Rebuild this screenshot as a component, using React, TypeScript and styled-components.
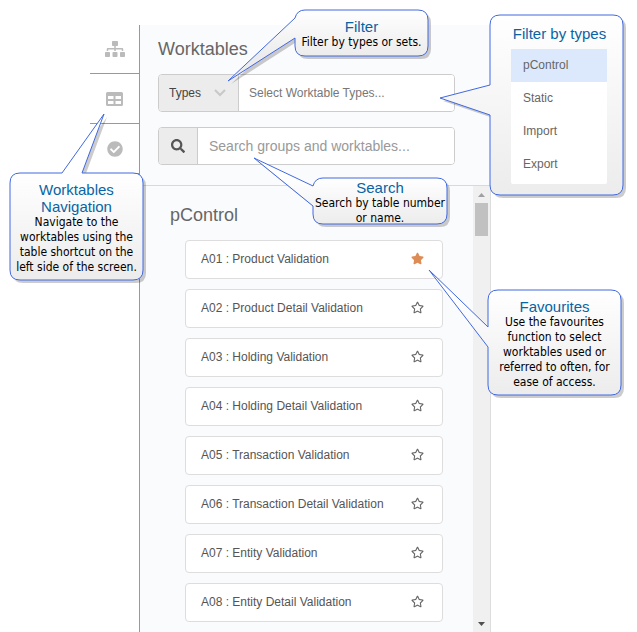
import React from "react";
import styled, { createGlobalStyle } from "styled-components";
import { FaCheckCircle, FaRegStar, FaSearch, FaSitemap, FaStar } from "react-icons/fa";

const GlobalStyle = createGlobalStyle`
  * { box-sizing: border-box; }
  body { margin: 0; background: #fff; }
  body, button, input, select { font-family: "Liberation Sans", Arial, sans-serif; }
`;

const Page = styled.div`
  position: relative;
  display: grid;
  grid-template-columns: 90px 50px minmax(0, 1fr) 146px;
  min-height: 100vh;
  padding-top: 25px;
`;

const Nav = styled.nav`
  grid-column: 2;
  display: flex;
  flex-direction: column;
  border-right: 1px solid #999;
`;

const NavButton = styled.button`
  display: flex;
  align-items: center;
  justify-content: center;
  height: 50px;
  padding: 0;
  border: 0;
  border-bottom: 1px solid #999;
  background: none;
  color: #bbb;

  &:first-child { height: 49px; }
`;

const Panel = styled.main`
  display: flex;
  flex-direction: column;
  border-right: 1px solid #ddd;
  background: #fafbfd;
`;

const PanelHeader = styled.header`
  display: flex;
  flex-direction: column;
  gap: 15px;
  padding: 13px 35px 20px 18px;
  border-bottom: 1px solid #d8d9db;
`;

const Title = styled.h1`
  margin: 0 0 -1px;
  color: #666;
  font-size: 18px;
  font-weight: 400;
  line-height: 22px;
`;

const FieldRow = styled.div`
  display: flex;
  height: 38px;
  overflow: hidden;
  border: 1px solid #ccc;
  border-radius: 4px;
  background: #fff;
`;

const TypePicker = styled.label`
  display: grid;
  grid-template-columns: 1fr 36px;
  align-items: center;
  width: 80px;
  border-right: 1px solid #ccc;
  background: #ececec;
  color: #c8c8c8;

  svg {
    grid-area: 1 / 2;
    justify-self: center;
  }
`;

const TypeSelect = styled.select`
  grid-area: 1 / 1 / 2 / 3;
  height: 100%;
  padding: 0 10px;
  border: 0;
  appearance: none;
  background: none;
  color: #444;
  font-size: 12px;
`;

const TextInput = styled.input<{ $large?: boolean }>`
  flex: 1;
  min-width: 0;
  padding: 0 ${(p) => (p.$large ? 11 : 10)}px;
  border: 0;
  background: #fff;
  font-size: ${(p) => (p.$large ? 14 : 12)}px;

  &::placeholder { color: ${(p) => (p.$large ? "#999" : "#777")}; }
`;

const SearchButton = styled.button`
  display: flex;
  align-items: center;
  justify-content: center;
  width: 39px;
  padding: 0;
  border: 0;
  border-right: 1px solid #ccc;
  background: #ececec;
  color: #555;
`;

const PanelBody = styled.div`
  display: flex;
  flex: 1;
`;

const Group = styled.section`
  flex: 1;
  min-width: 0;
  padding: 18px 30px 10px;
`;

const GroupTitle = styled.h2`
  margin: 0 0 14px;
  color: #666;
  font-size: 18px;
  font-weight: 400;
  line-height: 22px;
`;

const TableList = styled.ul`
  display: flex;
  flex-direction: column;
  gap: 10px;
  margin: 0 0 0 15px;
  padding: 0;
  list-style: none;
`;

const TableItem = styled.li`
  display: flex;
  align-items: center;
  justify-content: space-between;
  height: 39px;
  padding: 0 18px 2px 15px;
  border: 1px solid #ddd;
  border-radius: 4px;
  background: #fff;
  color: #555;
  font-size: 12px;
`;

const StarButton = styled.button<{ $active: boolean }>`
  display: flex;
  padding: 0;
  border: 0;
  background: none;
  color: ${(p) => (p.$active ? "#de8c56" : "#666")};
`;

const ScrollTrack = styled.div`
  display: flex;
  flex-direction: column;
  align-items: center;
  width: 17px;
  background: #f0f0f0;
`;

const ScrollArrow = styled.svg`
  width: 17px;
  height: 17px;
`;

const ScrollThumb = styled.div`
  width: 13px;
  height: 33px;
  margin-bottom: auto;
  background: #c1c1c1;
`;

const Bubble = styled.aside<{ $top: number; $left?: number; $right?: number; $w: number; $h: number; $pad: string }>`
  position: absolute;
  top: ${(p) => p.$top}px;
  ${(p) => (p.$left === undefined ? `right: ${p.$right}px;` : `left: ${p.$left}px;`)}
  width: ${(p) => p.$w}px;
  min-height: ${(p) => p.$h}px;
  padding: ${(p) => p.$pad};
  text-align: center;
`;

const BubbleShape = styled.svg`
  position: absolute;
  top: 0;
  left: 0;
  z-index: -1;
  overflow: visible;
`;

const Layer = styled.div`
  position: absolute;
  inset: 0;
  z-index: 1;
  pointer-events: none;
`;

const BubbleTitle = styled.h3`
  margin: 0;
  color: #0864a4;
  font-size: 15px;
  font-weight: 400;
  line-height: 17px;
`;

const BubbleText = styled.p`
  margin: 0 -8px;
  color: #000;
  font-family: "DejaVu Sans Condensed", "Noto Sans", sans-serif;
  font-size: 12px;
  line-height: 15px;
`;

const TypeMenu = styled.ul`
  margin: 7px 16px 0 15px;
  padding: 0 0 3px;
  border-radius: 2px;
  background: #fff;
  list-style: none;
`;

const TypeOption = styled.button<{ $selected: boolean }>`
  display: block;
  width: 100%;
  height: 33px;
  padding: 0 12px 2px;
  border: 0;
  background: ${(p) => (p.$selected ? "#dce9fd" : "none")};
  color: #666;
  font-size: 12px;
  text-align: left;
  pointer-events: auto;
`;

type Tail = { side: "left" | "top"; from: number; to: number; x: number; y: number };

function outline(w: number, h: number, t: Tail) {
  const r = 10;
  const top = t.side === "top" ? `L${t.from} 0L${t.x} ${t.y}L${t.to} 0` : "";
  const left = t.side === "left" ? `L0 ${t.to}L${t.x} ${t.y}L0 ${t.from}` : "";
  const corner = t.side === "left" && t.from < r ? `L0 ${t.from}Q2 0 ${r} 0` : `V${r}Q0 0 ${r} 0`;
  return `M${r} 0${top}H${w - r}Q${w} 0 ${w} ${r}V${h - r}Q${w} ${h} ${w - r} ${h}H${r}Q0 ${h} 0 ${h - r}${left}${corner}Z`;
}

type CalloutProps = {
  id: string;
  title: string;
  top: number;
  left?: number;
  right?: number;
  width: number;
  height: number;
  pad: string;
  tail: Tail;
  children: React.ReactNode;
};

function Callout({ id, title, top, left, right, width, height, pad, tail, children }: CalloutProps) {
  const d = outline(width, height, tail);
  return (
    <Bubble $top={top} $left={left} $right={right} $w={width} $h={height} $pad={pad}>
      <BubbleShape width={width} height={height} aria-hidden="true">
        <defs>
          <linearGradient id={id} gradientUnits="userSpaceOnUse" x1="0" y1="0" x2="0" y2={height}>
            <stop offset="0" stopColor="#fff" />
            <stop offset="1" stopColor="#ececec" />
          </linearGradient>
        </defs>
        <path d={d} fill="#000" fillOpacity="0.2" transform="translate(3 3)" />
        <path d={d} fill={`url(#${id})`} stroke="#4169e1" strokeLinejoin="round" />
      </BubbleShape>
      <BubbleTitle>{title}</BubbleTitle>
      {children}
    </Bubble>
  );
}

const tables = [
  "A01 : Product Validation",
  "A02 : Product Detail Validation",
  "A03 : Holding Validation",
  "A04 : Holding Detail Validation",
  "A05 : Transaction Validation",
  "A06 : Transaction Detail Validation",
  "A07 : Entity Validation",
  "A08 : Entity Detail Validation",
];

const types = ["pControl", "Static", "Import", "Export"];

export default function App() {
  return (
    <Page>
      <GlobalStyle />
      <Nav aria-label="Main">
        <NavButton aria-label="Hierarchy"><FaSitemap size={20} /></NavButton>
        <NavButton aria-label="Worktables">
          <svg width="17" height="14" viewBox="0 0 17 14">
            <path
              fill="currentColor"
              fillRule="evenodd"
              d="M1.5 0h14A1.5 1.5 0 0 1 17 1.5v11a1.5 1.5 0 0 1-1.5 1.5h-14A1.5 1.5 0 0 1 0 12.5v-11A1.5 1.5 0 0 1 1.5 0ZM2 4v3h5.500V4ZM9.500 4v3H15V4ZM2 9v3h5.500V9ZM9.500 9v3H15V9Z"
            />
          </svg>
        </NavButton>
        <NavButton aria-label="Validation"><FaCheckCircle size={16} /></NavButton>
      </Nav>
      <Panel>
        <PanelHeader>
          <Title>Worktables</Title>
          <FieldRow>
            <TypePicker>
              <TypeSelect aria-label="Filter kind" defaultValue="Types">
                <option>Types</option>
                <option>Sets</option>
              </TypeSelect>
              <svg width="12" height="8" viewBox="0 0 12 8" fill="none" stroke="currentColor" strokeWidth="2">
                <path d="M1 1l5 5 5-5" />
              </svg>
            </TypePicker>
            <TextInput aria-label="Worktable types" placeholder="Select Worktable Types..." />
          </FieldRow>
          <FieldRow>
            <SearchButton aria-label="Search"><FaSearch size={14} /></SearchButton>
            <TextInput $large aria-label="Search groups and worktables" placeholder="Search groups and worktables..." />
          </FieldRow>
        </PanelHeader>
        <PanelBody>
          <Group>
            <GroupTitle>pControl</GroupTitle>
            <TableList>
              {tables.map((name, i) => (
                <TableItem key={name}>
                  {name}
                  <StarButton $active={i === 0} aria-label={`Favourite ${name}`} aria-pressed={i === 0}>
                    {i === 0 ? <FaStar size={13} /> : <FaRegStar size={13} />}
                  </StarButton>
                </TableItem>
              ))}
            </TableList>
          </Group>
          <ScrollTrack aria-hidden="true">
            <ScrollArrow viewBox="0 0 17 17"><path d="M5 11h7l-3.500-4Z" fill="#a0a0a0" /></ScrollArrow>
            <ScrollThumb />
            <ScrollArrow viewBox="0 0 17 17"><path d="M5 7h7l-3.500 4Z" fill="#505050" /></ScrollArrow>
          </ScrollTrack>
        </PanelBody>
      </Panel>
      <Layer>
        <Callout id="filter" title="Filter" top={10} left={295} width={133} height={46} pad="8px 8px 0"
          tail={{ side: "left", from: 8, to: 28, x: -67, y: 71 }}>
          <BubbleText>Filter by types or sets.</BubbleText>
        </Callout>
        <Callout id="types" title="Filter by types" top={15} right={14} width={133} height={180} pad="10px 0 0 6px"
          tail={{ side: "left", from: 70, to: 100, x: -50, y: 83 }}>
          <TypeMenu>
            {types.map((t, i) => (
              <li key={t}><TypeOption $selected={i === 0}>{t}</TypeOption></li>
            ))}
          </TypeMenu>
        </Callout>
        <Callout id="navigation" title="Worktables Navigation" top={173} left={10} width={133} height={107} pad="8px 12px 0"
          tail={{ side: "top", from: 52, to: 72, x: 94, y: -59 }}>
          <BubbleText>Navigate to the worktables using the table shortcut on the left side of the screen.</BubbleText>
        </Callout>
        <Callout id="search" title="Search" top={178} left={313} width={134} height={46} pad="1px 8px 0"
          tail={{ side: "left", from: 8, to: 28, x: -59, y: -20 }}>
          <BubbleText>Search by table number or name.</BubbleText>
        </Callout>
        <Callout id="favourites" title="Favourites" top={290} right={16} width={133} height={105} pad="8px 12px 0"
          tail={{ side: "left", from: 37, to: 57, x: -59, y: -20 }}>
          <BubbleText>Use the favourites function to select worktables used or referred to often, for ease of access.</BubbleText>
        </Callout>
      </Layer>
    </Page>
  );
}
